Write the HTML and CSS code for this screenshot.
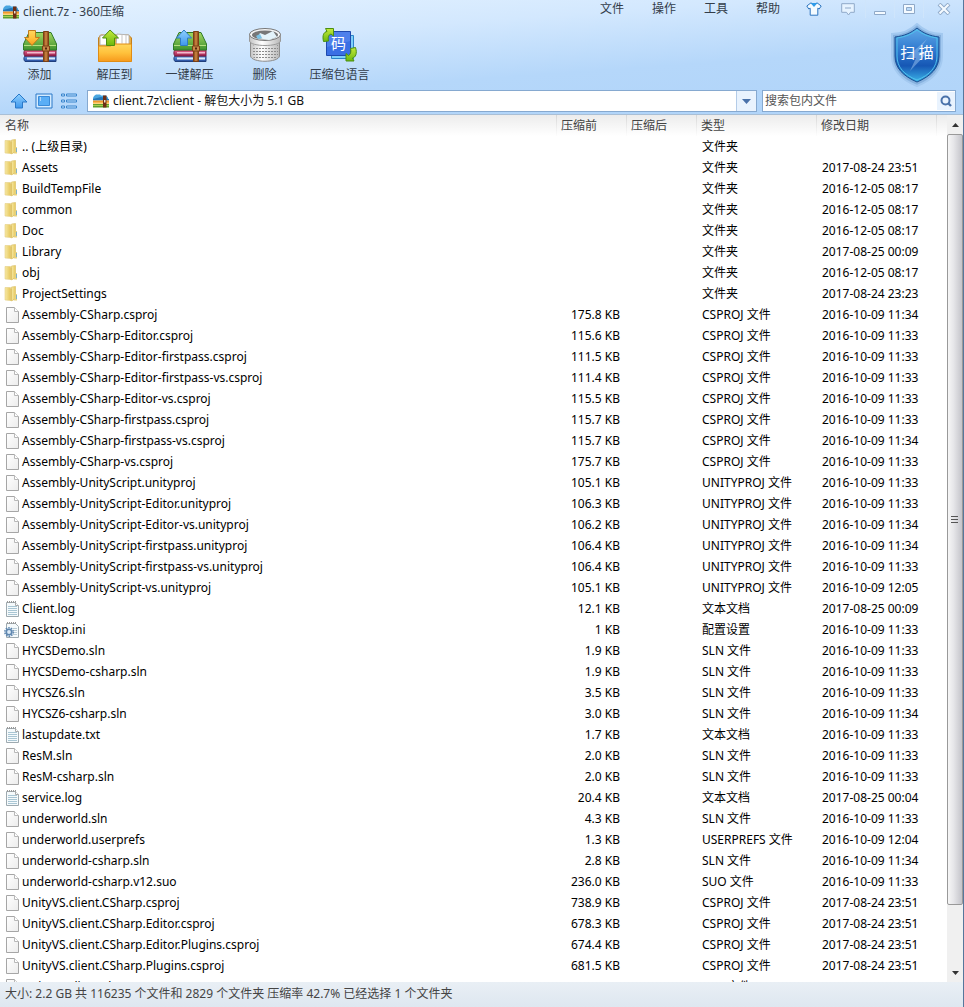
FILE: index.html
```html
<!DOCTYPE html>
<html lang="zh-CN">
<head>
<meta charset="utf-8">
<title>client.7z - 360压缩</title>
<link rel="stylesheet" href="styles.css">
</head>
<body>
<svg class="defs" aria-hidden="true">
  <defs>
    <linearGradient id="gFolder" x1="0" x2="1" y1="0" y2="0"><stop offset="0" stop-color="#f7e9a4"/><stop offset="1" stop-color="#e6c75c"/></linearGradient>
    <linearGradient id="gPage" x1="0" x2="1" y1="0" y2="1"><stop offset="0" stop-color="#fff"/><stop offset="1" stop-color="#ececec"/></linearGradient>
    <linearGradient id="gGreen" x1="0" x2="0" y1="0" y2="1"><stop offset="0" stop-color="#a4d862"/><stop offset="1" stop-color="#3f9330"/></linearGradient>
    <linearGradient id="gRed" x1="0" x2="0" y1="0" y2="1"><stop offset="0" stop-color="#e8628c"/><stop offset="1" stop-color="#98204c"/></linearGradient>
    <linearGradient id="gBlue" x1="0" x2="0" y1="0" y2="1"><stop offset="0" stop-color="#5d9ae6"/><stop offset="1" stop-color="#264b9c"/></linearGradient>
    <linearGradient id="gStrap" x1="0" x2="1" y1="0" y2="0"><stop offset="0" stop-color="#7a3a12"/><stop offset=".5" stop-color="#d28a44"/><stop offset="1" stop-color="#7a3a12"/></linearGradient>
    <linearGradient id="gOrange" x1="0" x2="0" y1="0" y2="1"><stop offset="0" stop-color="#ffd75e"/><stop offset=".5" stop-color="#ffc23c"/><stop offset="1" stop-color="#f79a1c"/></linearGradient>
    <linearGradient id="gArrow" x1="0" x2="0" y1="0" y2="1"><stop offset="0" stop-color="#8fd0ff"/><stop offset="1" stop-color="#3f97ec"/></linearGradient>
    <linearGradient id="gLime" x1="0" x2="0" y1="0" y2="1"><stop offset="0" stop-color="#c4ea3c"/><stop offset="1" stop-color="#6cb80e"/></linearGradient>
    <linearGradient id="gShield" x1="0" x2="0" y1="0" y2="1"><stop offset="0" stop-color="#5fa9e8"/><stop offset=".45" stop-color="#2b74cc"/><stop offset=".7" stop-color="#1657b4"/><stop offset="1" stop-color="#3cb4e8"/></linearGradient>
    <linearGradient id="gBin" x1="0" x2="1" y1="0" y2="0"><stop offset="0" stop-color="#c4c4c4"/><stop offset=".4" stop-color="#fff"/><stop offset="1" stop-color="#b8b8b8"/></linearGradient>
    <pattern id="holes" width="3" height="3" patternUnits="userSpaceOnUse"><rect width="2" height="1" fill="#8b8b8b"/></pattern>
    <symbol id="folder" viewBox="0 0 16 16">
      <path d="M1 1.500h5.500v13L1 14z" fill="url(#gFolder)" stroke="#e4cf84" stroke-width=".6"/>
      <path d="M6.500 2.500h4.500v11L6.500 15z" fill="#dcb94c"/>
      <path d="M7.500 1l4-.5v12l-4 2.500z" fill="url(#gFolder)" stroke="#d8bd62" stroke-width=".6"/>
      <path d="M11.500 8h1.500v6.500h-3z" fill="#e8d27e"/><path d="M12.500 9v4" stroke="#7fb0c8"/>
    </symbol>
    <symbol id="page" viewBox="0 0 16 16">
      <path d="M2.500.5h8l4 4v11h-12z" fill="url(#gPage)" stroke="#a6a6a6"/>
      <path d="M10.500.5v4h4" fill="#fff" stroke="#b8b8b8"/>
    </symbol>
    <symbol id="text" viewBox="0 0 16 16">
      <path d="M2.500 1.500h9l3 3v11h-12z" fill="#f5fafc" stroke="#9eaab0"/>
      <path d="M4 5.500h9M4 7.500h9M4 9.500h9M4 11.500h9M4 13.500h9" stroke="#a9c6d4"/>
      <path d="M3 1h9" stroke="#999" stroke-width="2" stroke-dasharray="1 1"/>
      <path d="M11.500 1.500v3h3" fill="#fff" stroke="#aaa"/>
    </symbol>
    <symbol id="ini" viewBox="0 0 16 16">
      <path d="M2.500 1.500h9l3 3v11h-12z" fill="#f5fafc" stroke="#9eaab0"/>
      <path d="M9 6.500h4M9 8.500h4M9 10.500h4M9 12.500h4" stroke="#b9ccd6"/>
      <path d="M3 1h9" stroke="#999" stroke-width="2" stroke-dasharray="1 1"/>
      <circle cx="5" cy="10" r="4.200" fill="none" stroke="#5f87b0" stroke-width="1.500" stroke-dasharray="1.600 1.040"/>
      <circle cx="5" cy="10" r="2.700" fill="#dcebf8" stroke="#5f87b0" stroke-width="1.600"/>
    </symbol>
    <symbol id="archive" viewBox="0 0 16 14">
      <path d="M1 2l2-1.500h4l1 1h5l2 2V6H0V4z" fill="#4aa6e0"/><path d="M0 5l8-2 8 2v1.500H0z" fill="#2476b8"/>
      <path d="M0 6.500h16V10H0z" fill="#f09a2c"/><path d="M0 8.500h16V10H0z" fill="#ffd27a"/>
      <path d="M0 10h16v3.500H0z" fill="#5f9e2e"/><path d="M0 11h16v1H0z" fill="#a6cf50"/>
      <path d="M10 1.500h3.500v12H10z" fill="#6e2e14"/><path d="M11 6h1.500v2.500H11z" fill="#f1e4d0"/>
    </symbol>
    <symbol id="books" viewBox="0 0 36 34">
      <path d="M3 27h31v5.500H3c-1.500-1.500-1.500-4 0-5.500z" fill="url(#gBlue)" stroke="#213f7c"/>
      <path d="M5 28.500h28v2H5z" fill="#dce9f8"/>
      <path d="M3 21h31v6H3c-1.500-1.500-1.500-4.500 0-6z" fill="url(#gRed)" stroke="#7c1c40"/>
      <path d="M5 23h28v1.500H5z" fill="#f2b8cc"/>
      <path d="M7 3.500h22L34.500 15v6H1.500v-6z" fill="url(#gGreen)" stroke="#2f7a28"/>
      <path d="M2 16.500h32" stroke="#b4e07e"/>
      <path d="M21.500 2.500h5v30h-5z" fill="url(#gStrap)" stroke="#7a4014"/>
      <path d="M20.500 17h7v5h-7z" fill="#c98a4a" stroke="#7a4014"/><path d="M23 18.500h2v2h-2z" fill="#55260c"/>
    </symbol>
  </defs>
</svg>

<div class="window">
  <header class="chrome">
    <div class="titlebar">
      <h1 class="title"><svg width="16" height="14"><use href="#archive"/></svg>client.7z - 360压缩</h1>
      <nav class="menu">
        <button>文件</button><button>操作</button><button>工具</button><button>帮助</button>
      </nav>
      <div class="controls">
        <button aria-label="皮肤"><svg width="16" height="14" viewBox="0 0 16 14"><path d="M5 .8L.8 4l2 3 1.400-.8v7h7.600v-7l1.400.8 2-3L11 .8C10 2.500 6 2.500 5 .8z" fill="#f4fbff" stroke="#2d76c0"/><path d="M4.500 1h7L8 5z" fill="#2f9be8"/></svg></button>
        <button aria-label="反馈"><svg width="14" height="13" viewBox="0 0 14 13"><path d="M.7.7h12.600v8.600H9.500L7.500 12l-2-2.700H.7z" fill="#e6f3ff" stroke="#8fa9c8"/><path d="M4 5h6" stroke="#8fa9c8"/></svg></button>
        <button class="sys" aria-label="最小化"><svg width="12" height="12" viewBox="0 0 12 12"><path d="M.5 8.500h11v3H.5z" fill="#f4faff" stroke="#8fa9c8"/></svg></button>
        <button class="sys" aria-label="最大化"><svg width="12" height="12" viewBox="0 0 12 12"><path d="M.5 1.500h11v9H.5z" fill="#f4faff" stroke="#8fa9c8"/><path d="M3.500 4.500h5v3h-5z" fill="#bcdcfa" stroke="#8fa9c8"/></svg></button>
        <button class="sys close" aria-label="关闭"><svg width="14" height="12" viewBox="0 0 14 12"><path d="M2 1l10 10M12 1L2 11" stroke="#8fa9c8" stroke-width="4"/><path d="M2.500 1.500l9 9M11.500 1.500l-9 9" stroke="#f4faff" stroke-width="2.200"/></svg></button>
      </div>
    </div>

    <div class="toolbar">
      <button class="tool"><svg width="36" height="34" viewBox="0 0 36 34"><use href="#books"/><path d="M6.500 1.500h7v7h4L10 16.500 2.500 8.500h4z" fill="url(#gOrange)" stroke="#c07a1c"/></svg>添加</button>
      <button class="tool"><svg width="36" height="34" viewBox="0 0 36 34"><path d="M1.500 9l2-3h28l3 3v23h-33z" fill="#e9ad43" stroke="#c27f1c"/><path d="M3 7l8-2 3 11H3zM20 5l12 1v11H19z" fill="#fff" stroke="#b4b4b4"/><path d="M29 6v9M25 5.500v9" stroke="#c5c5c5"/><path d="M1.500 17h12l3-2h18v17.500h-33z" fill="url(#gOrange)" stroke="#e08c14"/><path d="M13 1L5.500 9h4v7.500h8V9h4z" fill="url(#gLime)" stroke="#4b8f10"/></svg>解压到</button>
      <button class="tool"><svg width="36" height="34" viewBox="0 0 36 34"><use href="#books"/><path d="M12 1L4.500 9h4v7.500h7V9h4z" fill="url(#gArrow)" stroke="#2f7cc4"/></svg>一键解压</button>
      <button class="tool"><svg width="36" height="36" viewBox="0 0 36 36"><path d="M3.500 9v20c1 7 28 7 29 0V9z" fill="url(#gBin)" stroke="#8d8d8d"/><path d="M5 18c6 3 20 3 26 0v11c-3 5-23 5-26 0z" fill="url(#holes)"/><path d="M2.500 7v7c1 6 30 6 31 0V7z" fill="url(#gBin)" stroke="#999"/><ellipse cx="18" cy="7.500" rx="15.500" ry="6" fill="#f5f5f5" stroke="#777"/><ellipse cx="18" cy="8" rx="13" ry="4.500" fill="#777"/><path d="M10 11l3-5 5 2 8-4 4 6-8 3z" fill="#e4f3fa"/><path d="M9 9l4-2 2 4-4 1z" fill="#7cc3e6"/></svg>删除</button>
      <button class="tool"><svg width="36" height="36" viewBox="0 0 36 36"><path d="M9.500 8.500h22v23h-22z" fill="#7fd0fa" stroke="#2a84c8"/><path d="M4.500 4.500h24v24h-24z" fill="#3a6fe4" stroke="#1f49ae"/><path d="M5 5h23v9L5 20z" fill="#5b8cf0" opacity=".6"/><text x="16.500" y="22" class="glyph">码</text><path d="M1.500 14.500C0 8 2 5 5 4.500L3.500 1.500h8v7.500L9 7c-3 1-3 4-2.500 7z" fill="url(#gLime)" stroke="#4b8f10"/><path d="M33.500 20.500c2 6 0 10-3 10.500l1.500 3h-8v-7.500l2.500 2c2-1 3-4 2-7z" fill="url(#gLime)" stroke="#4b8f10"/></svg>压缩包语言</button>
      <button class="scan" aria-label="扫描"><svg width="54" height="64" viewBox="0 0 54 64"><path d="M27 1c6 6 14 10 25 10v22c0 14-10 24-25 30C12 57 2 47 2 33V11C13 11 21 7 27 1z" fill="#87b1de" stroke="#a3c9f0" stroke-width="2"/><path d="M27 5c6 5 13 8 22 9v19c0 12-8 20-22 26C13 53 5 45 5 33V14c9-1 16-4 22-9z" fill="url(#gShield)" stroke="#174f91"/><path d="M27 7c5 4 12 7 20 8v18c0 11-7 19-20 24C14 52 7 44 7 33V15c8-1 15-4 20-8z" fill="none" stroke="#4fc2ec" stroke-width="1"/><path d="M37 16L16 35h10l-6 13 18-19H28z" fill="#9cc4f0" opacity=".5"/><text x="27" y="35" class="scan-text">扫 描</text></svg></button>
    </div>

    <div class="addressbar">
      <button class="nav" aria-label="向上"><svg width="18" height="16" viewBox="0 0 18 16"><path d="M9 1l8 8h-4.500v6h-7V9H1z" fill="url(#gArrow)" stroke="#2a79c8"/></svg></button>
      <button class="nav" aria-label="视图"><svg width="18" height="16" viewBox="0 0 18 16"><path d="M1 1h16v14H1z" fill="#d4ebff" stroke="#2a79c8"/><path d="M3.500 3.500h11v9h-11z" fill="#5aaef6" stroke="#3a8ad8"/><path d="M5 5h1M5 7h1" stroke="#fff"/></svg></button>
      <button class="nav" aria-label="列表"><svg width="18" height="16" viewBox="0 0 18 16"><g fill="#bfe0ff" stroke="#3b85cc"><path d="M1.500 1h3v2h-3zM1.500 7h3v2h-3zM1.500 13h3v2h-3zM6.500 1h10v2h-10zM6.500 7h10v2h-10zM6.500 13h10v2h-10z"/></g></svg></button>
      <div class="field path">
        <svg width="16" height="14"><use href="#archive"/></svg>
        <input type="text" aria-label="路径" value="client.7z\client - 解包大小为 5.1 GB">
        <button class="drop" aria-label="展开"><svg width="9" height="5" viewBox="0 0 9 5"><path d="M0 0h9L4.500 5z" fill="#4a72aa"/></svg></button>
      </div>
      <div class="field search">
        <input type="text" aria-label="搜索包内文件" placeholder="搜索包内文件">
        <button class="find" aria-label="搜索"><svg width="12" height="12" viewBox="0 0 12 12"><circle cx="5.500" cy="5.500" r="4" fill="none" stroke="#4a72aa" stroke-width="2"/><path d="M8 8l3 3" stroke="#4a72aa" stroke-width="2.400"/></svg></button>
      </div>
    </div>
  </header>

  <main class="list">
    <div class="files">
    <table>
      <colgroup><col><col class="c-size"><col class="c-size"><col class="c-wide"><col class="c-wide"><col class="c-end"></colgroup>
      <thead><tr><th>名称</th><th>压缩前</th><th>压缩后</th><th>类型</th><th>修改日期</th><th></th></tr></thead>
      <tbody>
        <tr><td><svg><use href="#folder"/></svg>.. (上级目录)</td><td></td><td></td><td>文件夹</td><td></td></tr>
        <tr><td><svg><use href="#folder"/></svg>Assets</td><td></td><td></td><td>文件夹</td><td>2017-08-24 23:51</td></tr>
        <tr><td><svg><use href="#folder"/></svg>BuildTempFile</td><td></td><td></td><td>文件夹</td><td>2016-12-05 08:17</td></tr>
        <tr><td><svg><use href="#folder"/></svg>common</td><td></td><td></td><td>文件夹</td><td>2016-12-05 08:17</td></tr>
        <tr><td><svg><use href="#folder"/></svg>Doc</td><td></td><td></td><td>文件夹</td><td>2016-12-05 08:17</td></tr>
        <tr><td><svg><use href="#folder"/></svg>Library</td><td></td><td></td><td>文件夹</td><td>2017-08-25 00:09</td></tr>
        <tr><td><svg><use href="#folder"/></svg>obj</td><td></td><td></td><td>文件夹</td><td>2016-12-05 08:17</td></tr>
        <tr><td><svg><use href="#folder"/></svg>ProjectSettings</td><td></td><td></td><td>文件夹</td><td>2017-08-24 23:23</td></tr>
        <tr><td><svg><use href="#page"/></svg>Assembly-CSharp.csproj</td><td>175.8 KB</td><td></td><td>CSPROJ 文件</td><td>2016-10-09 11:34</td></tr>
        <tr><td><svg><use href="#page"/></svg>Assembly-CSharp-Editor.csproj</td><td>115.6 KB</td><td></td><td>CSPROJ 文件</td><td>2016-10-09 11:33</td></tr>
        <tr><td><svg><use href="#page"/></svg>Assembly-CSharp-Editor-firstpass.csproj</td><td>111.5 KB</td><td></td><td>CSPROJ 文件</td><td>2016-10-09 11:33</td></tr>
        <tr><td><svg><use href="#page"/></svg>Assembly-CSharp-Editor-firstpass-vs.csproj</td><td>111.4 KB</td><td></td><td>CSPROJ 文件</td><td>2016-10-09 11:33</td></tr>
        <tr><td><svg><use href="#page"/></svg>Assembly-CSharp-Editor-vs.csproj</td><td>115.5 KB</td><td></td><td>CSPROJ 文件</td><td>2016-10-09 11:33</td></tr>
        <tr><td><svg><use href="#page"/></svg>Assembly-CSharp-firstpass.csproj</td><td>115.7 KB</td><td></td><td>CSPROJ 文件</td><td>2016-10-09 11:33</td></tr>
        <tr><td><svg><use href="#page"/></svg>Assembly-CSharp-firstpass-vs.csproj</td><td>115.7 KB</td><td></td><td>CSPROJ 文件</td><td>2016-10-09 11:34</td></tr>
        <tr><td><svg><use href="#page"/></svg>Assembly-CSharp-vs.csproj</td><td>175.7 KB</td><td></td><td>CSPROJ 文件</td><td>2016-10-09 11:33</td></tr>
        <tr><td><svg><use href="#page"/></svg>Assembly-UnityScript.unityproj</td><td>105.1 KB</td><td></td><td>UNITYPROJ 文件</td><td>2016-10-09 11:33</td></tr>
        <tr><td><svg><use href="#page"/></svg>Assembly-UnityScript-Editor.unityproj</td><td>106.3 KB</td><td></td><td>UNITYPROJ 文件</td><td>2016-10-09 11:33</td></tr>
        <tr><td><svg><use href="#page"/></svg>Assembly-UnityScript-Editor-vs.unityproj</td><td>106.2 KB</td><td></td><td>UNITYPROJ 文件</td><td>2016-10-09 11:34</td></tr>
        <tr><td><svg><use href="#page"/></svg>Assembly-UnityScript-firstpass.unityproj</td><td>106.4 KB</td><td></td><td>UNITYPROJ 文件</td><td>2016-10-09 11:34</td></tr>
        <tr><td><svg><use href="#page"/></svg>Assembly-UnityScript-firstpass-vs.unityproj</td><td>106.4 KB</td><td></td><td>UNITYPROJ 文件</td><td>2016-10-09 11:33</td></tr>
        <tr><td><svg><use href="#page"/></svg>Assembly-UnityScript-vs.unityproj</td><td>105.1 KB</td><td></td><td>UNITYPROJ 文件</td><td>2016-10-09 12:05</td></tr>
        <tr><td><svg><use href="#text"/></svg>Client.log</td><td>12.1 KB</td><td></td><td>文本文档</td><td>2017-08-25 00:09</td></tr>
        <tr><td><svg><use href="#ini"/></svg>Desktop.ini</td><td>1 KB</td><td></td><td>配置设置</td><td>2016-10-09 11:33</td></tr>
        <tr><td><svg><use href="#page"/></svg>HYCSDemo.sln</td><td>1.9 KB</td><td></td><td>SLN 文件</td><td>2016-10-09 11:33</td></tr>
        <tr><td><svg><use href="#page"/></svg>HYCSDemo-csharp.sln</td><td>1.9 KB</td><td></td><td>SLN 文件</td><td>2016-10-09 11:33</td></tr>
        <tr><td><svg><use href="#page"/></svg>HYCSZ6.sln</td><td>3.5 KB</td><td></td><td>SLN 文件</td><td>2016-10-09 11:33</td></tr>
        <tr><td><svg><use href="#page"/></svg>HYCSZ6-csharp.sln</td><td>3.0 KB</td><td></td><td>SLN 文件</td><td>2016-10-09 11:34</td></tr>
        <tr><td><svg><use href="#text"/></svg>lastupdate.txt</td><td>1.7 KB</td><td></td><td>文本文档</td><td>2016-10-09 11:33</td></tr>
        <tr><td><svg><use href="#page"/></svg>ResM.sln</td><td>2.0 KB</td><td></td><td>SLN 文件</td><td>2016-10-09 11:33</td></tr>
        <tr><td><svg><use href="#page"/></svg>ResM-csharp.sln</td><td>2.0 KB</td><td></td><td>SLN 文件</td><td>2016-10-09 11:33</td></tr>
        <tr><td><svg><use href="#text"/></svg>service.log</td><td>20.4 KB</td><td></td><td>文本文档</td><td>2017-08-25 00:04</td></tr>
        <tr><td><svg><use href="#page"/></svg>underworld.sln</td><td>4.3 KB</td><td></td><td>SLN 文件</td><td>2016-10-09 11:33</td></tr>
        <tr><td><svg><use href="#page"/></svg>underworld.userprefs</td><td>1.3 KB</td><td></td><td>USERPREFS 文件</td><td>2016-10-09 12:04</td></tr>
        <tr><td><svg><use href="#page"/></svg>underworld-csharp.sln</td><td>2.8 KB</td><td></td><td>SLN 文件</td><td>2016-10-09 11:34</td></tr>
        <tr><td><svg><use href="#page"/></svg>underworld-csharp.v12.suo</td><td>236.0 KB</td><td></td><td>SUO 文件</td><td>2016-10-09 11:33</td></tr>
        <tr><td><svg><use href="#page"/></svg>UnityVS.client.CSharp.csproj</td><td>738.9 KB</td><td></td><td>CSPROJ 文件</td><td>2017-08-24 23:51</td></tr>
        <tr><td><svg><use href="#page"/></svg>UnityVS.client.CSharp.Editor.csproj</td><td>678.3 KB</td><td></td><td>CSPROJ 文件</td><td>2017-08-24 23:51</td></tr>
        <tr><td><svg><use href="#page"/></svg>UnityVS.client.CSharp.Editor.Plugins.csproj</td><td>674.4 KB</td><td></td><td>CSPROJ 文件</td><td>2017-08-24 23:51</td></tr>
        <tr><td><svg><use href="#page"/></svg>UnityVS.client.CSharp.Plugins.csproj</td><td>681.5 KB</td><td></td><td>CSPROJ 文件</td><td>2017-08-24 23:51</td></tr>
        <tr><td><svg><use href="#page"/></svg>UnityVS.client.sln</td><td></td><td></td><td>SLN 文件</td><td></td></tr>
      </tbody>
    </table>
    </div>
    <div class="scrollbar">
      <button aria-label="向上滚动"><svg width="7" height="4" viewBox="0 0 7 4"><path d="M0 4h7L3.500 0z" fill="#333"/></svg></button>
      <div class="track"><div class="thumb"><svg width="8" height="8" viewBox="0 0 8 8"><path d="M0 1.500h7M0 4.500h7M0 7.500h7" stroke="#555"/></svg></div></div>
      <button aria-label="向下滚动"><svg width="7" height="4" viewBox="0 0 7 4"><path d="M0 0h7L3.500 4z" fill="#333"/></svg></button>
    </div>
  </main>

  <footer class="status">大小: 2.2 GB 共 116235 个文件和 2829 个文件夹 压缩率 42.7% 已经选择 1 个文件夹</footer>
</div>
</body>
</html>
```
FILE: styles.css
```css
* { box-sizing: border-box; }
body {
  margin: 0;
  font: 12px/20px "Noto Sans", "Noto Sans CJK SC", sans-serif;
  color: #000;
}
svg { display: block; flex: none; }
.defs { position: absolute; width: 0; height: 0; }
button, input { font: inherit; color: inherit; border: 0; padding: 0; background: none; }
button { display: flex; align-items: center; justify-content: center; }

.window {
  display: flex;
  flex-direction: column;
  height: 100vh;
  border-right: 1px solid #56779c;
  overflow: hidden;
}

.chrome {
  flex: none;
  background: linear-gradient(176deg, #e4f2ff 0, #d3e8fe 30%, #b5d7fa 62%, #b0d4f9 100%);
  border-bottom: 1px solid #a9bfd6;
  color: #333d4a;
}
.titlebar { display: flex; height: 23px; align-items: flex-start; }
.title {
  display: flex;
  align-items: center;
  gap: 4px;
  flex: 1;
  height: 23px;
  margin: 0;
  padding-left: 3px;
  font-size: 12px;
  font-weight: 400;
}
.menu { display: flex; margin-right: 3px; }
.menu button { width: 52px; height: 18px; }
.controls { display: flex; }
.controls button { width: 34px; height: 18px; }
.controls .sys { width: 29px; border-left: 1px solid #cfe5fb; }
.controls .close { width: 40px; }

.toolbar { display: flex; height: 64px; padding-left: 2px; }
.tool {
  flex-direction: column;
  justify-content: flex-end;
  width: 75px;
  padding-bottom: 2px;
  gap: 2px;
  white-space: nowrap;
}
.glyph, .scan-text {
  font-family: "Noto Sans CJK SC", sans-serif;
  fill: #fff;
  text-anchor: middle;
  font-size: 15px;
}
.scan-text { font-size: 15px; }
.scan { margin-left: auto; margin-right: 19px; }

.addressbar {
  display: flex;
  align-items: center;
  gap: 7px;
  padding: 3px 7px 2px 10px;
}
.nav { width: 18px; height: 22px; }
.field {
  display: flex;
  align-items: center;
  height: 22px;
  background: #fff;
  border: 1px solid #86a9d0;
}
.field input { flex: 1; min-width: 0; height: 20px; outline: 0; }
.path { flex: 1; margin-left: 2px; padding-left: 5px; gap: 4px; color: #111; }
.drop { width: 20px; height: 20px; background: #e9f3fe; border-left: 1px solid #b4cce8; }
.search { width: 194px; padding-left: 2px; margin-left: -2px; }
.search input::placeholder { color: #555; opacity: 1; }
.find { width: 18px; height: 18px; background: #e9f3fe; }

.list { display: flex; flex: 1; min-height: 0; }
.files { flex: 1; min-width: 0; overflow: hidden; background: linear-gradient(#ececec, #fff 21px); }
table { width: 100%; table-layout: fixed; border-collapse: separate; border-spacing: 0; }
.c-size { width: 70px; }
.c-wide { width: 120px; }
.c-end { width: 11px; }
th, td { height: 21px; padding: 0 0 0 5px; text-align: left; white-space: nowrap; font-weight: 400; }
th + th {
  padding-left: 4px;
  border-left: 1px solid #ddd;
  border-image: linear-gradient(#d4d4d4, #fff) 1;
}
th { color: #444; }
td:first-child { display: flex; align-items: center; gap: 2px; padding-left: 4px; }
td:first-child svg { width: 16px; height: 16px; }
td:nth-child(2) { text-align: right; padding: 0 6px 0 0; }
td:nth-child(n+4) { padding-left: 6px; }

.scrollbar { display: flex; flex-direction: column; width: 16px; background: #f0f0f0; }
.scrollbar button { width: 16px; height: 19px; }
.track { flex: 1; min-height: 0; }
.thumb {
  display: flex;
  align-items: center;
  justify-content: center;
  height: 93%;
  border: 1px solid #999;
  border-radius: 2px;
  background: linear-gradient(90deg, #f6f6f6, #e6e6e9 40%, #c4c4ca);
}

.status {
  flex: none;
  height: 25px;
  padding: 2px 5px;
  background: linear-gradient(#e9eff5, #dee7f0);
  color: #444;
  white-space: nowrap;
}
```
